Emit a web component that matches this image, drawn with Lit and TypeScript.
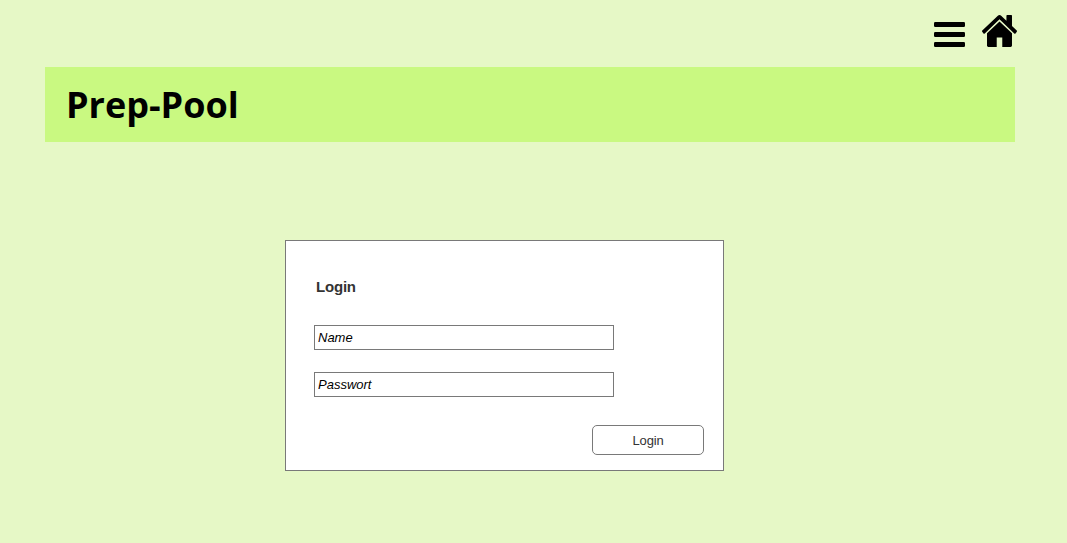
import { LitElement, html, css } from "lit";
import { customElement } from "lit/decorators.js";

@customElement("app-root")
export class AppRoot extends LitElement {
  static styles = css`
    :host { display: block; box-sizing: border-box; height: 543px; padding: 14px 52px 0 45px; background: #e6f8c6; font-family: "Liberation Sans", Arial, sans-serif; color: #333; overflow: hidden; }
    nav { display: flex; justify-content: flex-end; gap: 17px; height: 53px; }
    .menu { width: 31px; height: 25px; margin-top: 8px; }
    .home { width: 35px; height: 32px; margin: 1px -2px 0 0; }
    svg { display: block; }
    header { display: flex; align-items: center; height: 75px; box-sizing: border-box; padding: 0 21px 0 21px; background: #c9f981; }
    h1 { margin: 0; font: 700 36px/49px "Open Sans", sans-serif; color: #000; }
    form { box-sizing: border-box; width: 439px; height: 231px; margin: 98px 0 0 240px; border: 1px solid #797979; background: #fff; padding: 37px 19px 15px 28px; display: flex; flex-direction: column; }
    h2 { margin: 0 0 29px 2px; font-size: 15px; line-height: 18px; font-weight: 700; letter-spacing: -0.2px; }
    input { box-sizing: border-box; width: 300px; height: 25px; margin: 0 0 22px; padding: 1px 3px; border: 1px solid #797979; border-radius: 0; background: #fff; font: italic 13px "Liberation Sans", Arial, sans-serif; color: #000; outline: 0; }
    button { box-sizing: border-box; align-self: flex-end; width: 112px; height: 30px; margin-top: 6px; padding: 0; border: 1px solid #797979; border-radius: 5px; background: #fff; font: 13px "Liberation Sans", Arial, sans-serif; color: #333; letter-spacing: -0.15px; }
  `;

  render() {
    return html`
      <nav>
        <svg class="menu" viewBox="0 0 31 25"><rect width="31" height="5" rx="1.2"/><rect y="10" width="31" height="5" rx="1.2"/><rect y="20" width="31" height="5" rx="1.2"/></svg>
        <svg class="home" viewBox="89 253 1614 1283" preserveAspectRatio="none"><path d="M1472 992v480q0 26-19 45t-45 19h-384v-384h-256v384h-384q-26 0-45-19t-19-45v-480q0-1 .5-3t.5-3l575-474 575 474q1 2 1 6zm223-69l-62 74q-8 9-21 11h-3q-13 0-21-7l-692-577-692 577q-12 8-24 7-13-2-21-11l-62-74q-8-10-7-23.500t11-21.500l719-599q32-26 76-26t76 26l244 204v-195q0-14 9-23t23-9h192q14 0 23 9t9 23v408l219 182q10 8 11 21.500t-7 23.500z"/></svg>
      </nav>
      <header><h1>Prep-Pool</h1></header>
      <form @submit=${(e: Event) => e.preventDefault()}>
        <h2>Login</h2>
        <input type="text" value="Name" aria-label="Name" />
        <input type="text" value="Passwort" aria-label="Passwort" />
        <button type="submit">Login</button>
      </form>
    `;
  }
}
